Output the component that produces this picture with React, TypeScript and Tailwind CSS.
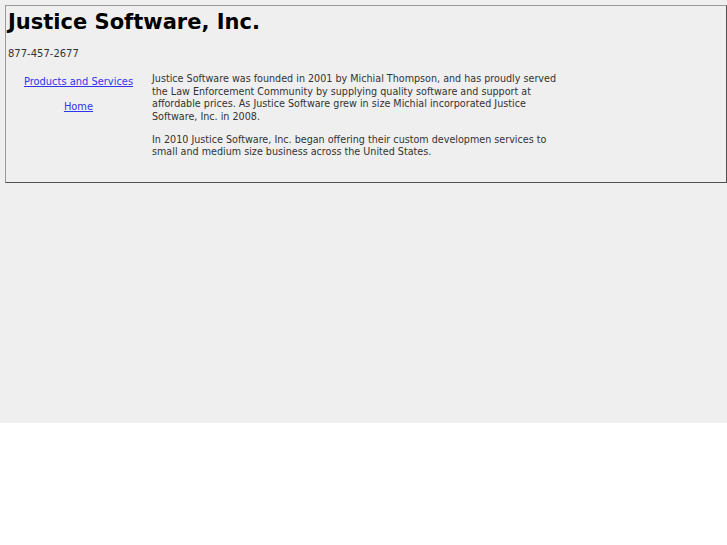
export default function App() {
  return (
    <div className="h-[423px] bg-[#efefef] pl-[5px] pt-[5px] font-['DejaVu_Sans',Verdana,sans-serif] text-[#333333]">
      <div className="border border-t-[#9a9a9a] border-l-[#9a9a9a] border-r-[#505050] border-b-[#505050] px-[2px] pb-[23px]">
        <h1 className="pt-[3px] text-[21px] leading-[26px] font-bold text-black">Justice Software, Inc.</h1>
        <p className="mt-[12px] text-[10px] leading-[13px]">877-457-2677</p>
        <div className="mt-[13px] flex">
          <nav className="flex w-[141px] flex-col items-center gap-[12px] pt-[2px] text-[9.9px] leading-[13px]">
            <a href="#" className="text-[#3333ee] underline">Products and Services</a>
            <a href="#" className="text-[#3333ee] underline">Home</a>
          </nav>
          <div className="ml-[3px] w-[415px] text-[9.6px] leading-[12.67px]">
            <p>
              Justice Software was founded in 2001 by Michial Thompson, and has proudly served the Law Enforcement
              Community by supplying quality software and support at affordable prices. As Justice Software grew in
              size Michial incorporated Justice Software, Inc. in 2008.
            </p>
            <p className="mt-[10px]">
              In 2010 Justice Software, Inc. began offering their custom developmen services to small and medium size
              business across the United States.
            </p>
          </div>
        </div>
      </div>
    </div>
  );
}
